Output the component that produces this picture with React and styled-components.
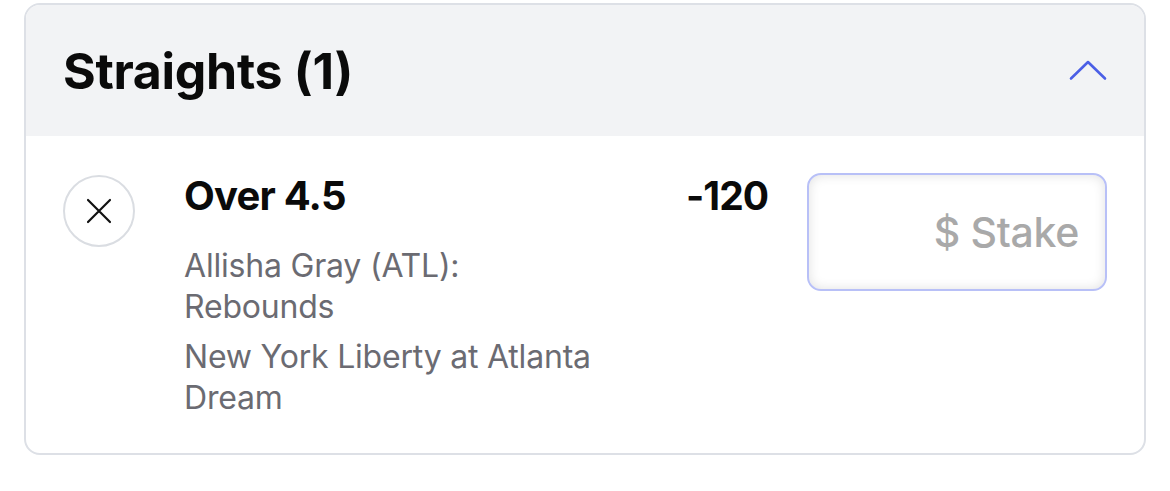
import styled, { createGlobalStyle } from "styled-components";

const GlobalStyle = createGlobalStyle`
  body {
    margin: 0;
    background: #ffffff;
    font-family: Inter, "Noto Sans", sans-serif;
  }
`;

const ChevronUp = () => (
  <svg width="40" height="22" viewBox="0 0 40 22" fill="none">
    <path
      d="M3 19.5 L20 3 L37 19.5"
      stroke="#4b5fe6"
      strokeWidth="2.6"
      strokeLinecap="round"
      strokeLinejoin="round"
    />
  </svg>
);

const CloseIcon = () => (
  <svg width="26" height="26" viewBox="0 0 26 26" fill="none">
    <path
      d="M2 2 L24 24 M24 2 L2 24"
      stroke="#111"
      strokeWidth="2.2"
      strokeLinecap="round"
    />
  </svg>
);

const BetSlip = ({ title, count, bet }) => {
  return (
    <StyledCard>
      <StyledHeader>
        <StyledTitle>
          {title} ({count})
        </StyledTitle>
        <StyledToggle>
          <ChevronUp />
        </StyledToggle>
      </StyledHeader>
      <StyledBody>
        <StyledRemove>
          <CloseIcon />
        </StyledRemove>
        <StyledInfo>
          <StyledPick>{bet.pick}</StyledPick>
          <StyledDetail>{bet.market}</StyledDetail>
          <StyledDetail>{bet.event}</StyledDetail>
        </StyledInfo>
        <StyledOdds>{bet.odds}</StyledOdds>
        <StyledStake placeholder="$ Stake" />
      </StyledBody>
    </StyledCard>
  );
};

const App = () => {
  return (
    <>
      <GlobalStyle />
      <BetSlip
        title="Straights"
        count={1}
        bet={{
          pick: "Over 4.5",
          market: "Allisha Gray (ATL): Rebounds",
          event: "New York Liberty at Atlanta Dream",
          odds: "-120",
        }}
      />
    </>
  );
};

const StyledCard = styled.section`
  margin: 3px 24px 0 24px;
  border: 2px solid #dde0e6;
  border-radius: 16px;
  overflow: hidden;
  background: #ffffff;
`;

const StyledHeader = styled.header`
  display: flex;
  align-items: center;
  justify-content: space-between;
  height: 131px;
  padding: 0 36px 0 37px;
  background: #f2f3f5;
`;

const StyledTitle = styled.h2`
  margin: 0;
  font-size: 50px;
  line-height: 60px;
  font-weight: 700;
  color: #0a0a0a;
  letter-spacing: -0.3px;
`;

const StyledToggle = styled.button`
  display: flex;
  padding: 0;
  border: none;
  background: none;
  margin-top: -2px;
`;

const StyledBody = styled.div`
  display: grid;
  grid-template-columns: 72px 471px 1fr 300px;
  align-items: start;
  padding: 38px 37px 35px 37px;
`;

const StyledRemove = styled.button`
  display: flex;
  align-items: center;
  justify-content: center;
  width: 72px;
  height: 72px;
  margin-top: 1px;
  padding: 0;
  border: 2px solid #dadde2;
  border-radius: 50%;
  background: #ffffff;
`;

const StyledInfo = styled.div`
  display: flex;
  flex-direction: column;
  gap: 9px;
  padding-left: 49px;
  width: 422px;
`;

const StyledPick = styled.div`
  font-size: 40px;
  font-weight: 700;
  color: #0a0a0a;
  line-height: 48px;
  letter-spacing: -0.8px;
  margin-top: -2px;
  margin-bottom: 16px;
`;

const StyledDetail = styled.div`
  font-size: 32px;
  line-height: 41px;
  color: #6b6b72;
  letter-spacing: -0.2px;
`;

const StyledOdds = styled.div`
  font-size: 39px;
  font-weight: 700;
  color: #0a0a0a;
  line-height: 48px;
  letter-spacing: -1px;
  text-align: right;
  padding-right: 39px;
  margin-top: -2px;
`;

const StyledStake = styled.input`
  box-sizing: border-box;
  width: 300px;
  height: 118px;
  margin-top: -1px;
  padding: 0 26px;
  border: 2px solid #b8c0f7;
  border-radius: 14px;
  background: #ffffff;
  box-shadow: inset 0 0 12px rgba(0, 0, 0, 0.12);
  font-family: Inter, "Noto Sans", sans-serif;
  font-size: 41px;
  font-weight: 500;
  letter-spacing: -0.3px;
  text-align: right;
  outline: none;
  &::placeholder {
    color: #a9a9a9;
  }
`;

export default App;
